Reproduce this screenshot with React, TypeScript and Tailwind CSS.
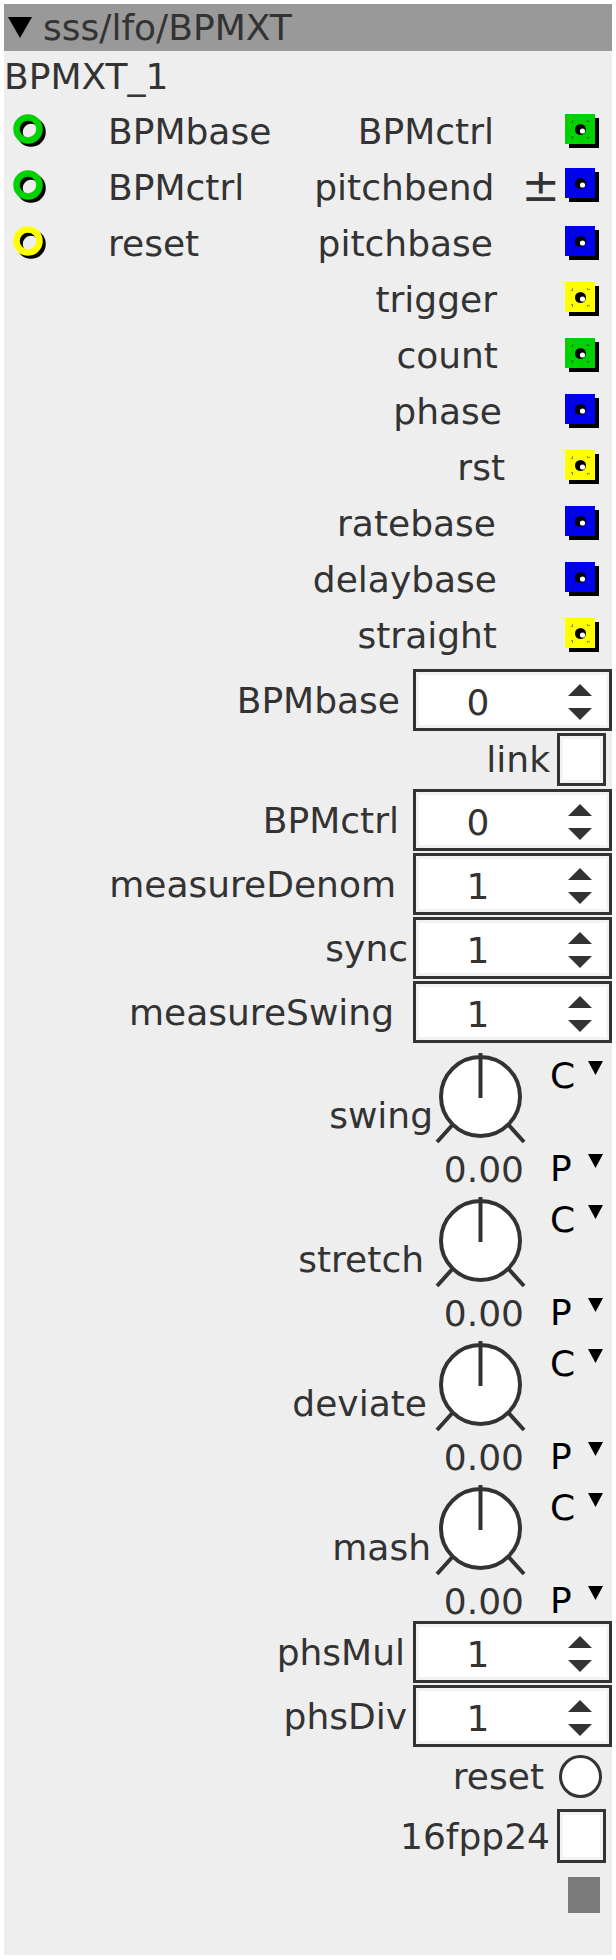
import React from 'react';

type Color = 'green' | 'blue' | 'yellow';

const fills: Record<Color, string> = {
  green: '#00d200',
  blue: '#0000f0',
  yellow: '#ffff00',
};

const ports: { inlet?: Color; left?: string; right: string; jack: Color; mr: string; pm?: boolean }[] = [
  { inlet: 'green', left: 'BPMbase', right: 'BPMctrl', jack: 'green', mr: 'mr-[71px]' },
  { inlet: 'green', left: 'BPMctrl', right: 'pitchbend', jack: 'blue', mr: 'mr-[27px]', pm: true },
  { inlet: 'yellow', left: 'reset', right: 'pitchbase', jack: 'blue', mr: 'mr-[72px]' },
  { right: 'trigger', jack: 'yellow', mr: 'mr-[68px]' },
  { right: 'count', jack: 'green', mr: 'mr-[67px]' },
  { right: 'phase', jack: 'blue', mr: 'mr-[63px]' },
  { right: 'rst', jack: 'yellow', mr: 'mr-[60px]' },
  { right: 'ratebase', jack: 'blue', mr: 'mr-[69px]' },
  { right: 'delaybase', jack: 'blue', mr: 'mr-[68px]' },
  { right: 'straight', jack: 'yellow', mr: 'mr-[68px]' },
];

const knobs = [
  { label: 'swing', mr: 'mr-0' },
  { label: 'stretch', mr: 'mr-[9px]' },
  { label: 'deviate', mr: 'mr-[6px]' },
  { label: 'mash', mr: 'mr-[2px]' },
];

const Inlet = ({ color }: { color: Color }) => (
  <svg width="34" height="34" viewBox="0 0 34 34">
    <circle cx="18" cy="18" r="11.5" fill="none" stroke="#000" strokeWidth="6.5" />
    <circle cx="15" cy="15" r="11.5" fill="none" stroke={fills[color]} strokeWidth="6.5" />
  </svg>
);

const Jack = ({ color }: { color: Color }) => (
  <svg width="34" height="34" viewBox="0 0 34 34">
    <rect x="4" y="4" width="30" height="30" fill="#000" />
    <rect x="0" y="0" width="30" height="30" fill={fills[color]} />
    <path
      d="M7 9V7H9 M22 7H24V9 M7 22V24H9 M22 24H24V22"
      fill="none"
      stroke="#222"
      strokeWidth="1"
      strokeDasharray="1 1"
    />
    <circle cx="15.5" cy="15.5" r="5.5" fill="#000" />
    <circle cx="17.5" cy="17" r="2.6" fill="#fff" />
  </svg>
);

const Tri = ({ w, h, up = false, color = '#000' }: { w: number; h: number; up?: boolean; color?: string }) => (
  <svg width={w} height={h} viewBox={`0 0 ${w} ${h}`}>
    <polygon points={up ? `0,${h} ${w / 2},0 ${w},${h}` : `0,0 ${w},0 ${w / 2},${h}`} fill={color} />
  </svg>
);

const Spinner = ({ label, value, mr, mt }: { label: string; value: string; mr: string; mt: string }) => (
  <div className={`flex justify-end items-center h-[62px] ${mt}`}>
    <span className={mr}>{label}</span>
    <div className="w-[199px] h-[62px] border-[3px] border-[#333]">
      <div className="h-full border-[3px] border-[#f2f2f2] bg-white flex items-center">
        <div className="w-[118px] text-center pt-[4px]">{value}</div>
        <div className="ml-[31px] mt-[4px] flex flex-col gap-[12px]">
          <Tri w={24} h={12} up color="#333" />
          <Tri w={24} h={12} color="#333" />
        </div>
      </div>
    </div>
  </div>
);

const Checkbox = ({ h }: { h: string }) => (
  <div className={`w-[49px] ${h} border-[3px] border-[#333] mr-[6px]`}>
    <div className="h-full border-[3px] border-[#f2f2f2] bg-white" />
  </div>
);

const Knob = () => (
  <svg width="96" height="100" viewBox="0 0 96 100">
    <line x1="4" y1="93" x2="23" y2="72" stroke="#333" strokeWidth="4" />
    <line x1="91" y1="93" x2="72" y2="72" stroke="#333" strokeWidth="4" />
    <circle cx="47.5" cy="47.5" r="39.5" fill="#fff" stroke="#333" strokeWidth="4" />
    <line x1="47.5" y1="4" x2="47.5" y2="49" stroke="#333" strokeWidth="4" />
  </svg>
);

export default function App() {
  return (
    <div className="w-[616px] h-[1960px] bg-white pt-[4px] pl-[4px] font-['DejaVu_Sans',sans-serif] text-[36px] leading-[41px] text-[#333]">
      <div className="w-[608px] h-[1951px] bg-[#eeeeee] flex flex-col">
        <div className="h-[47px] bg-[#999999] flex items-center">
          <div className="ml-[4px]">
            <Tri w={24} h={21} />
          </div>
          <span className="ml-[11px]">sss/lfo/BPMXT</span>
        </div>
        <div className="mt-[5px]">BPMXT_1</div>

        <div className="mt-[6px] flex flex-col">
          {ports.map((p) => (
            <div key={p.right} className="h-[56px] flex items-center">
              <div className="w-[104px] pl-[9px] flex items-center">{p.inlet && <Inlet color={p.inlet} />}</div>
              {p.left && <span>{p.left}</span>}
              <div className="ml-auto flex items-center">
                <span className={p.mr}>{p.right}</span>
                {p.pm && <span className="mr-[5px] mb-[4px] text-[46px]">±</span>}
                <div className="self-start mt-[3px] mr-[13px]">
                  <Jack color={p.jack} />
                </div>
              </div>
            </div>
          ))}
        </div>

        <Spinner label="BPMbase" value="0" mr="mr-[13px]" mt="mt-[6px]" />
        <div className="mt-[2px] h-[53px] flex justify-end items-center">
          <span className="mr-[7px]">link</span>
          <Checkbox h="h-[53px]" />
        </div>
        <Spinner label="BPMctrl" value="0" mr="mr-[14px]" mt="mt-[3px]" />
        <Spinner label="measureDenom" value="1" mr="mr-[17px]" mt="mt-[2px]" />
        <Spinner label="sync" value="1" mr="mr-[5px]" mt="mt-[2px]" />
        <Spinner label="measureSwing" value="1" mr="mr-[19px]" mt="mt-[2px]" />

        <div className="mt-[2px] flex flex-col">
          {knobs.map((k) => (
            <div key={k.label} className="h-[144px] flex justify-end items-start">
              <span className={`mt-[50px] ${k.mr}`}>{k.label}</span>
              <div className="w-[96px] flex flex-col">
                <div className="mt-[4px] h-[100px]">
                  <Knob />
                </div>
                <div className="text-right pr-[5px]">0.00</div>
              </div>
              <div className="ml-[21px] w-[62px] flex flex-col text-black">
                <div className="mt-[10px] flex items-start">
                  <span className="w-[38px]">C</span>
                  <div className="mt-[6px]">
                    <Tri w={15} h={14} />
                  </div>
                </div>
                <div className="mt-[52px] flex items-start">
                  <span className="w-[38px]">P</span>
                  <div className="mt-[6px]">
                    <Tri w={15} h={14} />
                  </div>
                </div>
              </div>
            </div>
          ))}
        </div>

        <Spinner label="phsMul" value="1" mr="mr-[8px]" mt="mt-0" />
        <Spinner label="phsDiv" value="1" mr="mr-[6px]" mt="mt-[2px]" />

        <div className="mt-[8px] h-[43px] flex justify-end items-center">
          <span className="mr-[15px]">reset</span>
          <div className="w-[43px] h-[43px] rounded-full border-[3px] border-[#333] bg-white mr-[10px]" />
        </div>
        <div className="mt-[11px] h-[54px] flex justify-end items-center">
          <span className="mr-[7px]">16fpp24</span>
          <Checkbox h="h-[54px]" />
        </div>
        <div className="mt-[14px] self-end w-[32px] h-[36px] bg-[#7a7a7a] mr-[12px]" />
      </div>
    </div>
  );
}
